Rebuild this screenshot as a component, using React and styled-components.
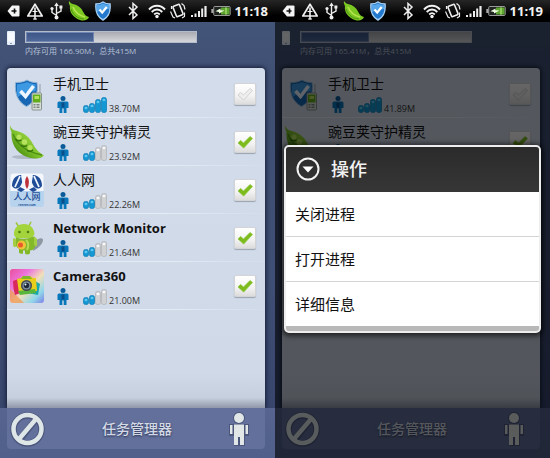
import React, { useState } from "react";
import styled, { createGlobalStyle } from "styled-components";

const GlobalStyle = createGlobalStyle`
  * {
    box-sizing: border-box;
  }
  body {
    margin: 0;
    background: #000;
    font-family: "Open Sans", "Noto Sans CJK SC", sans-serif;
  }
  svg {
    display: block;
    flex: none;
  }
`;

const Screens = styled.div`
  display: flex;
  min-height: 100vh;
`;

const Phone = styled.section`
  flex: 1;
  min-width: 0;
  display: flex;
  flex-direction: column;
`;

const StatusBar = styled.header`
  display: flex;
  align-items: center;
  justify-content: space-between;
  height: 22px;
  padding: 0 7px;
  background: linear-gradient(#262626, #000 70%);
  color: #f2f2f2;
`;

const StatusGroup = styled.div`
  display: flex;
  align-items: center;
  gap: ${props => props.$gap}px;
`;

const Clock = styled.time`
  font-size: 13px;
  font-weight: 700;
  line-height: 20px;
`;

const Screen = styled.div`
  position: relative;
  flex: 1;
  display: flex;
  flex-direction: column;
  background: linear-gradient(#435578, #405074 12%, #3f4e74 60%, #35426a);
`;

const Memory = styled.div`
  display: flex;
  align-items: flex-start;
  gap: 10px;
  height: 46px;
  padding: 9px 7px 0;
`;

const MemoryInfo = styled.div`
  flex: 0 1 172px;
`;

const Track = styled.div`
  height: 12px;
  margin-bottom: 1px;
  border: 1px solid #b4bccb;
  background: linear-gradient(#a9abb2, #d6d7da);
`;

const Fill = styled.div`
  height: 100%;
  border: 1px solid #7186b0;
  background: linear-gradient(#3d5688, #4e6898);
`;

const MemoryText = styled.div`
  font-size: 8px;
  line-height: 14px;
  color: #b4c0d6;
  white-space: nowrap;
`;

const Card = styled.ul`
  flex: 1;
  margin: 0 10px 0 7px;
  padding: 2px 0 0;
  list-style: none;
  border-radius: 4px 4px 0 0;
  background: linear-gradient(#d3dcea, #cfd9e8 90%, #c6cfdd 97%, #8f97a8);
  box-shadow: 0 0 4px 1px #161d36;
`;

const Row = styled.li`
  display: flex;
  align-items: center;
  height: 48px;
  padding: 0 9px 0 3px;
  gap: 9px;
  border-bottom: 1px solid;
  border-image: linear-gradient(90deg, #e6ecf5, #e6ecf5 60%, #d3dcea) 1;
`;

const Details = styled.div`
  flex: 1;
  min-width: 0;
`;

const Name = styled.div`
  font-size: ${props => (props.$bold ? 13 : 14)}px;
  font-weight: ${props => (props.$bold ? 700 : 400)};
  line-height: 20px;
  color: #111;
  white-space: nowrap;
`;

const Usage = styled.div`
  display: flex;
  align-items: flex-end;
  height: 20px;
  padding: 0 0 1px 4px;
`;

const Size = styled.span`
  margin-left: 2px;
  font-size: 9px;
  line-height: 9px;
  color: #333;
`;

const Level = styled.span`
  margin-left: 14px;
`;

const CheckLabel = styled.label`
  display: grid;
  place-items: center;

  > * {
    grid-area: 1 / 1;
  }
  svg {
    pointer-events: none;
  }
`;

const CheckInput = styled.input`
  appearance: none;
  width: 22px;
  height: 22px;
  margin: 0;
  border: 1px solid #d2d4d6;
  border-radius: 2px;
  background: linear-gradient(#fff, #f2f2f2 60%, #dcdcdc);
  box-shadow: 0 1px 1px #9aa2b0;
`;

const Footer = styled.footer`
  height: 50px;
  padding: 0 10px 9px 7px;
  background: linear-gradient(#56648f, #50608a);
`;

const FooterPanel = styled.div`
  display: flex;
  align-items: center;
  justify-content: space-between;
  height: 100%;
  padding: 0 16px 0 3px;
  border-radius: 0 0 4px 4px;
  background: #63709b;
`;

const FooterButton = styled.button`
  padding: 0;
  border: 0;
  background: none;
`;

const FooterTitle = styled.h1`
  margin: 0;
  font-size: 14px;
  font-weight: 500;
  line-height: 20px;
  color: #d3d9e6;
  text-shadow: 0 1px 2px #27304f;
`;

const Backdrop = styled.div`
  position: absolute;
  inset: 0;
  display: flex;
  align-items: center;
  padding: 0 9px 3px;
  background: rgba(0, 0, 0, 0.6);
`;

const Dialog = styled.div`
  flex: 1;
  overflow: hidden;
  border: 2px solid #eee;
  border-radius: 5px;
  background: #b8b8b8;
  box-shadow: 0 1px 5px 2px rgba(0, 0, 0, 0.6);
`;

const DialogHeader = styled.div`
  display: flex;
  align-items: center;
  gap: 11px;
  height: 45px;
  padding: 0 10px;
  background: linear-gradient(#2b2b2b, #363636);
`;

const DialogTitle = styled.h2`
  margin: 0;
  font-size: 18px;
  font-weight: 500;
  line-height: 24px;
  color: #f2f2f2;
`;

const MenuItem = styled.button`
  display: block;
  width: 100%;
  height: 44px;
  padding: 0 9px;
  border: 0;
  background: #fff;
  font-family: inherit;
  font-size: 15px;
  line-height: 20px;
  color: #111;
  text-align: left;
`;

const Menu = styled.div`
  padding-bottom: 5px;

  ${MenuItem} + ${MenuItem} {
    height: 45px;
    border-top: 1px solid #d4d4d4;
  }
`;

const TagIcon = () => (
  <svg width="13" height="14" viewBox="0 0 13 14">
    <path d="M5 1.5h6.5q1 0 1 1v9q0 1-1 1H5L.5 7z" fill="#f4f4f4" />
    <path d="M4.5 7h5M7.5 4.5v5" stroke="#111" strokeWidth="1.6" />
  </svg>
);

const WarnIcon = () => (
  <svg width="18" height="18" viewBox="0 0 18 18" fill="none" stroke="#f0f0f0">
    <path d="M9 2.2 16.2 14H1.8z" strokeWidth="1.7" strokeLinejoin="round" />
    <path d="M9 5.5v12" strokeWidth="1.6" />
    <path d="M6.5 9.5h5M7 17h4" strokeWidth="1" />
  </svg>
);

const UsbIcon = () => (
  <svg width="13" height="18" viewBox="0 0 13 18" fill="none" stroke="#eee">
    <path d="M6.5 3v12M6.5 13.5 2 10.5V7M6.5 11.5l4.5-2.5V6" strokeWidth="1.4" />
    <path d="m6.5.5 2.3 3.5H4.2z" fill="#eee" stroke="none" />
    <circle cx="6.5" cy="15.5" r="2" fill="#eee" stroke="none" />
    <circle cx="2" cy="6.5" r="1.6" fill="#eee" stroke="none" />
    <path d="M9.4 3.5h3v3h-3z" fill="#eee" stroke="none" />
  </svg>
);

const PeaSmall = () => (
  <svg width="20" height="22" viewBox="1 0 20 22" overflow="visible">
    <path
      d="M1 1c2 2 1.5 2.500 4 3 5 1 8 3.500 10 7.500 1.500 3 3 5 6 5.500-1 3-5 4.500-9 3C5 17.500 1 12 2 6 1.200 4 .5 3 1 1z"
      fill="#7cc822"
    />
    <path d="M5 7c2 5 6 8.500 12 10" stroke="#b7e34c" strokeWidth="1.6" fill="none" />
    <path d="M3 9c2 6 7 10 13 10" stroke="#4c9510" strokeWidth="1" fill="none" />
  </svg>
);

const ShieldSmall = () => (
  <svg width="16" height="20" viewBox="0 0 16 20">
    <path
      d="M8 1c2 1.5 4.5 2 7 2 .8 8-1 12.500-7 16C2 15.500.2 11 1 3c2.500 0 5-.5 7-2z"
      fill="#2279cd"
      stroke="#a9d0f2"
      strokeWidth="1.5"
    />
    <path d="M8 2.500c2 1 4 1.500 6 1.600l.1 4Q8 8 2 11q-.6-3-.2-6.900c2.400 0 4.200-.6 6.200-1.600z" fill="#57a7ea" />
    <path d="m4.500 8.500 2.700 3 4.500-5.500" fill="none" stroke="#fff" strokeWidth="2.2" />
  </svg>
);

const BluetoothIcon = () => (
  <svg width="20" height="18" viewBox="0 0 20 18">
    <path d="m5 5 8 8-4 3.500v-15L13 5l-8 8" fill="none" stroke="#eee" strokeWidth="1.5" />
  </svg>
);

const WifiIcon = () => (
  <svg width="18" height="16" viewBox="0 0 18 16" fill="none" stroke="#f2f2f2" strokeWidth="1.9">
    <path d="M1 6.500c4.500-5 11.500-5 16 0M3.700 9c3.200-3.300 7.400-3.300 10.600 0M6.200 11.500c1.800-1.800 3.800-1.800 5.600 0" />
    <circle cx="9" cy="13.500" r="1.700" fill="#f2f2f2" stroke="none" />
  </svg>
);

const VibrateIcon = () => (
  <svg width="16" height="18" viewBox="0 0 16 18" fill="none" stroke="#eee">
    <rect x="4.500" y="3" width="7" height="11" rx="1" strokeWidth="1.600" transform="rotate(-22 8 8.500)" />
    <path d="M1.500 4v3M.5 9.500 3 15l2 1M11.500 1.500l2.500 2 1 4M14.500 10.500v4l-2.500 1.500" strokeWidth="1.200" />
  </svg>
);

const SignalIcon = () => (
  <svg width="17" height="14" viewBox="0 0 17 14" fill="#ededed">
    <path d="M1 11h2v2H1zM4.500 9.500h2V13h-2zM8 7h2v6H8zM11.200 4.500h2V13h-2zM14.400 2h2.200v11h-2.200z" />
  </svg>
);

const BatteryIcon = () => (
  <svg width="20" height="12" viewBox="0 0 20 12">
    <rect x="2.700" y="1.500" width="16.500" height="9" rx="1" fill="#202420" stroke="#999" />
    <path d="M.3 4h2v4h-2z" fill="#aaa" />
    <path d="M10 2.500h8.500v7H10z" fill="#5da52e" />
    <path d="M14 2.500h2v7h-2z" fill="#8fca5d" />
    <path d="m4.500 6.300 5-2.800v1.800l4 .2-5.500 3V7z" fill="#efffe0" />
  </svg>
);

const DeviceIcon = () => (
  <svg width="8" height="14" viewBox="0 0 8 14">
    <rect width="8" height="14" rx="1" fill="#e6eefa" />
    <path d="M1 1.500h6v9H1z" fill="#f7faff" />
    <path d="M3 12h2v1H3z" fill="#8c9cb8" />
  </svg>
);

const GuardIcon = () => (
  <svg width="34" height="34" viewBox="0 0 34 34">
    <path
      d="M17 3c3 2 6 2.500 10 2.500C28.500 17 25 25 16.500 29.500 8 25 4.500 17 5.500 5.500 9.500 5.500 14 5 17 3z"
      fill="#1767b4"
      stroke="#8fb6d8"
    />
    <path d="M17 5c3 1.500 6 2 8.500 2.200.4 3 .3 5 0 7C17 14 11 17 8 20 6.700 16 6.700 11 7 7.200 11 7 14 6.500 17 5z" fill="#3d9ae2" />
    <path d="m10.500 14 5 5.500L23.500 9" fill="none" stroke="#eef6ff" strokeWidth="3.600" />
    <path d="M30 7v10" stroke="#a9b2ba" strokeWidth="1.500" />
    <rect x="22" y="16" width="9.500" height="17" rx="1" fill="#d8ddd8" stroke="#88928c" />
    <rect x="23" y="17.500" width="7.500" height="8" fill="#63ad1d" />
    <path d="M24.500 19h4.500v3h-4.500z" fill="#b6e15f" />
    <path d="M23.500 27h2v1.500h-2zM26.500 27h3v1.500h-3zM23.500 29.500h2V31h-2zM26.500 29.500h3V31h-3z" fill="#7d8781" />
  </svg>
);

const PeaIcon = () => (
  <svg width="34" height="34" viewBox="0 0 34 34">
    <defs>
      <linearGradient id="pod" x1="1" y1="0" x2="0" y2="1">
        <stop offset=".3" stopColor="#a5d84a" />
        <stop offset=".55" stopColor="#7cc02a" />
        <stop offset=".8" stopColor="#4f9414" />
      </linearGradient>
    </defs>
    <ellipse cx="17" cy="32" rx="15" ry="2" fill="#8d97a6" opacity=".5" />
    <path
      d="M.5.5C1 3 2 4.500 5 5.500c8 2 13 5 16.500 11 3 5.500 6 10.500 12.500 14-2 3-8 3.500-13.500 2.500C9 30.500.5 21 1.500 7 .5 5-.2 2.500.5.5z"
      fill="url(#pod)"
    />
    <path d="M3 9c3 9 12 18 29 21" fill="none" stroke="#4a8d12" strokeWidth="1.300" />
    <g fill="#b7e35c">
      <circle cx="9" cy="12" r="2.600" />
      <circle cx="14.500" cy="17" r="2.800" />
      <circle cx="20" cy="22.500" r="2.600" />
    </g>
    <path d="M5.500 14q2.500 3 6 1M11 20q3 2.500 6 .5M17 25.500q3 2 6-.5" fill="none" stroke="#35700a" strokeWidth="1.300" />
  </svg>
);

const RenrenIcon = () => (
  <svg width="34" height="34" viewBox="0 0 34 34">
    <rect x=".5" y=".5" width="33" height="33" rx="3" fill="#f4f8fd" />
    <path d="M0 18h34v13q0 3-3 3H3q-3 0-3-3z" fill="#b7d3ed" />
    <g fill="#214d98">
      <path d="M11 2C5 2 2 7 2 13c3 4 7 3 9-1 2-3 2-7 0-10zM23 2c6 0 9 5 9 11-3 4-7 3-9-1-2-3-2-7 0-10z" />
      <path d="m10 14 5 2.500-4 2.500-4-2zM24 14l-5 2.500 4 2.500 4-2z" />
    </g>
    <path d="M10 3 5 14M24 3l5 11M12 3l2 11M22 3l-2 11" stroke="#eef5fd" strokeWidth="1.800" />
    <path d="M17 3q4 6 0 13-4-7 0-13z" fill="#bd3039" />
    <text x="17" y="27" textAnchor="middle" fontSize="9" fontWeight="500" fill="#234f96">
      人人网
    </text>
    <text x="17" y="33" textAnchor="middle" fontSize="3" fontWeight="700" fill="#234f96">
      renren.com
    </text>
  </svg>
);

const AndroidIcon = () => (
  <svg width="34" height="34" viewBox="0 0 34 34">
    <path d="M25 20c5-4 8-3 8-1 0 4-6 9-10 11z" fill="#69757c" opacity=".65" />
    <path d="M6 1.500 9 6M21 .8 18.500 6" stroke="#9ac63a" strokeWidth="1.500" />
    <path d="M4 14C3.500 7 8 3 14 3s10 4 10.500 10L22 17H6z" fill="#a3d43c" />
    <path d="M6 16.500q9 3 18-1l1 10q-1 4-5 4v3q-3 2-5 0v-3h-2v3q-3 1-4-1v-4q-3-1-3-4z" fill="#83b928" />
    <path d="M3 17.500q2-1 3 1v7q-2 2-3-1zM24 15l3 3v7q-2 1-3-2z" fill="#a4cf42" />
    <circle cx="9.500" cy="11" r="1.300" fill="#4f7a13" />
    <circle cx="18" cy="11" r="1.300" fill="#4f7a13" />
    <circle cx="11.500" cy="24" r="4.500" fill="#efc23a" />
    <circle cx="10.500" cy="24" r="2.500" fill="#ea5a2c" />
    <path d="M16 19q4 4 1 10" fill="none" stroke="#b9db58" strokeWidth="2" />
  </svg>
);

const CameraIcon = () => (
  <svg width="34" height="34" viewBox="0 0 34 34">
    <defs>
      <linearGradient id="camera-sky" x1="0" y1="0" x2="1" y2="1">
        <stop offset="0" stopColor="#ea4f9c" />
        <stop offset=".3" stopColor="#ec74dd" />
        <stop offset=".55" stopColor="#f2dfb8" />
        <stop offset=".8" stopColor="#8fd6ea" />
        <stop offset="1" stopColor="#7f7ee6" />
      </linearGradient>
    </defs>
    <rect width="34" height="34" rx="3" fill="url(#camera-sky)" />
    <path d="M0 20 14 34H3q-3 0-3-3z" fill="#ef9a54" opacity=".75" />
    <path d="m3 12 8-3 2 14-8 3q-2-6-2-14z" fill="#d9285c" />
    <path d="m22 10 8 5-2 11-10-2z" fill="#18a7ad" />
    <path d="m7 10 4-1 2-2h7l3 2h3l1 13-18 2z" fill="#e9cf1c" />
    <path d="M13 7h7l2 3H11z" fill="#7eb92c" />
    <path d="m8 22 17-2 1 4-16 2z" fill="#58b63a" />
    <circle cx="16.500" cy="16.500" r="5.500" fill="#414752" />
    <circle cx="16.500" cy="16.500" r="4" fill="#7f929b" />
    <circle cx="16.500" cy="16.500" r="2.700" fill="#1f2838" />
    <circle cx="15.500" cy="15.500" r="1" fill="#e8f7ff" />
  </svg>
);

const PersonIcon = () => (
  <svg width="12" height="17" viewBox="0 0 12 17">
    <circle cx="6" cy="2.500" r="2.500" fill="#0b5b98" />
    <path d="M2 5.500h8q1.500 0 1.500 1.500v5h-2V17H6.700v-4.500H5.300V17H2.500v-5h-2V7Q.5 5.500 2 5.500z" fill="#0876b8" />
    <path d="M4.500 6.500h3v5h-3z" fill="#0a4d88" />
  </svg>
);

// four pills rising to the right, the first `value` of them lit
const LevelBars = ({ value }) => (
  <svg width="24" height="17" viewBox="0 0 24 17">
    {[7, 9, 13, 15].map((h, i) => (
      <g key={h}>
        <rect
          x={i * 6 + 0.5}
          y={16.5 - h}
          width="5"
          height={h}
          rx="2"
          fill={i < value ? "#1398d3" : "#cfd1d3"}
          stroke={i < value ? "#1680b7" : "#b3b5b8"}
          strokeWidth=".8"
        />
        <ellipse cx={i * 6 + 3} cy={19 - h} rx="1.500" ry="1.200" fill={i < value ? "#5cc7ef" : "#f8f8f8"} />
      </g>
    ))}
  </svg>
);

const CheckIcon = ({ on }) => (
  <svg width="18" height="18" viewBox="0 0 18 18">
    <path
      d="m2 10 2.500-2.500L7.500 10 14 3.500l2.500 2L7.700 15z"
      fill={on ? "#7dbb1d" : "#eee"}
      stroke={on ? "#8dc63b" : "#c9c9c9"}
      strokeWidth=".8"
      strokeLinejoin="round"
    />
  </svg>
);

const BanIcon = () => (
  <svg width="35" height="36" viewBox="0 0 35 36" fill="none">
    <g stroke="#343e61" strokeWidth="6.500" opacity=".5">
      <circle cx="17.500" cy="18.500" r="14" />
      <path d="M9 29.500 26 8.500" />
    </g>
    <circle cx="17.500" cy="18" r="14" stroke="#dfe6e7" strokeWidth="4.500" />
    <path d="M9 28 26 8" stroke="#dfe6e7" strokeWidth="4.500" />
  </svg>
);

const FigureIcon = () => (
  <svg width="20" height="34" viewBox="0 0 20 34">
    <g fill="#343e61" opacity=".5">
      <circle cx="10" cy="6" r="6" />
      <path d="M0 12h20v12h-4v10H5V24H0z" />
    </g>
    <g fill="#e0e7e6">
      <circle cx="10" cy="6" r="5" />
      <path d="M5 12.500h10V33h-4v-8H9v8H5z" />
      <path d="M1 13h2.500v9H1zM16.500 13H19v9h-2.500z" />
    </g>
  </svg>
);

const ArrowIcon = () => (
  <svg width="24" height="24" viewBox="0 0 24 24">
    <circle cx="12" cy="12" r="10.500" fill="none" stroke="#f2f2f2" strokeWidth="2" />
    <path d="M6.500 9.500h11L12 15.500z" fill="#fff" />
  </svg>
);

const apps = [
  { name: "手机卫士", icon: GuardIcon, size: 38.7, level: 4 },
  { name: "豌豆荚守护精灵", icon: PeaIcon, size: 23.92, level: 2, checked: true },
  { name: "人人网", icon: RenrenIcon, size: 22.26, level: 2, checked: true },
  { name: "Network Monitor", icon: AndroidIcon, size: 21.64, level: 2, checked: true, bold: true },
  { name: "Camera360", icon: CameraIcon, size: 21, level: 2, checked: true, bold: true }
];

const laterApps = apps.map((app, i) => (i === 0 ? { ...app, size: 41.89 } : app));

const actions = ["关闭进程", "打开进程", "详细信息"];

const AppRow = ({ app }) => {
  const [checked, setChecked] = useState(!!app.checked);
  const Icon = app.icon;
  return (
    <Row>
      <Icon />
      <Details>
        <Name $bold={app.bold}>{app.name}</Name>
        <Usage>
          <PersonIcon />
          <Level>
            <LevelBars value={app.level} />
          </Level>
          <Size>{app.size.toFixed(2)}M</Size>
        </Usage>
      </Details>
      <CheckLabel>
        <CheckInput
          type="checkbox"
          aria-label={app.name}
          checked={checked}
          onChange={e => setChecked(e.target.checked)}
        />
        <CheckIcon on={checked} />
      </CheckLabel>
    </Row>
  );
};

const TaskManager = ({ time, free, total, items, children }) => (
  <Phone>
    <StatusBar>
      <StatusGroup $gap={6}>
        <TagIcon />
        <WarnIcon />
        <UsbIcon />
        <PeaSmall />
        <ShieldSmall />
      </StatusGroup>
      <StatusGroup $gap={4}>
        <BluetoothIcon />
        <WifiIcon />
        <VibrateIcon />
        <SignalIcon />
        <BatteryIcon />
        <Clock>{time}</Clock>
      </StatusGroup>
    </StatusBar>
    <Screen>
      <Memory>
        <DeviceIcon />
        <MemoryInfo>
          <Track>
            <Fill style={{ width: `${(free / total) * 100}%` }} />
          </Track>
          <MemoryText>
            内存可用 {free.toFixed(2)}M，总共{total}M
          </MemoryText>
        </MemoryInfo>
      </Memory>
      <Card>
        {items.map(app => (
          <AppRow key={app.name} app={app} />
        ))}
      </Card>
      <Footer>
        <FooterPanel>
          <FooterButton type="button" aria-label="关闭进程">
            <BanIcon />
          </FooterButton>
          <FooterTitle>任务管理器</FooterTitle>
          <FooterButton type="button" aria-label="详细信息">
            <FigureIcon />
          </FooterButton>
        </FooterPanel>
      </Footer>
      {children}
    </Screen>
  </Phone>
);

const App = () => (
  <>
    <GlobalStyle />
    <Screens>
      <TaskManager time="11:18" free={166.9} total={415} items={apps} />
      <TaskManager time="11:19" free={165.41} total={415} items={laterApps}>
        <Backdrop>
          <Dialog role="dialog" aria-labelledby="actions-title">
            <DialogHeader>
              <ArrowIcon />
              <DialogTitle id="actions-title">操作</DialogTitle>
            </DialogHeader>
            <Menu>
              {actions.map(action => (
                <MenuItem key={action} type="button">
                  {action}
                </MenuItem>
              ))}
            </Menu>
          </Dialog>
        </Backdrop>
      </TaskManager>
    </Screens>
  </>
);

export default App;
